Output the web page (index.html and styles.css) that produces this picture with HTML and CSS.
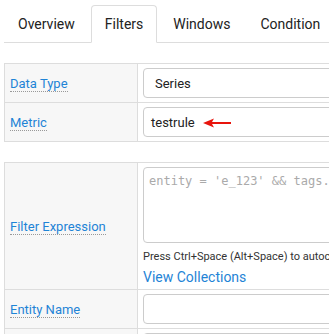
FILE: index.html
```html
<!DOCTYPE html>
<html lang="en">
<head>
  <meta charset="UTF-8" />
  <title>Rule Editor</title>
  <link rel="stylesheet" href="styles.css">
</head>
<body>
  <div class="page">
    <ul class="tabs">
      <li><a href="#">Overview</a></li>
      <li class="active"><a href="#">Filters</a></li>
      <li><a href="#">Windows</a></li>
      <li><a href="#">Condition</a></li>
      <li><a href="#">Actions</a></li>
    </ul>

    <table class="form-table">
      <tr>
        <th><span class="hint">Data Type</span></th>
        <td><div class="field select">Series</div></td>
      </tr>
      <tr>
        <th><span class="hint">Metric</span></th>
        <td>
          <div class="field">testrule
            <svg class="arrow" width="28" height="10" viewBox="0 0 28 10">
              <path d="M0 5 L11 0.5 L9 4 L28 4 L28 6 L9 6 L11 9.5 Z" fill="#e8140c"/>
            </svg>
          </div>
        </td>
      </tr>
    </table>

    <table class="form-table">
      <tr>
        <th><span class="hint">Filter Expression</span></th>
        <td>
          <textarea class="field expr" placeholder="entity = 'e_123' &amp;&amp; tags.severity = 'critical'"></textarea>
          <p class="help">Press Ctrl+Space (Alt+Space) to autocomplete</p>
          <a class="link" href="#">View Collections</a>
        </td>
      </tr>
      <tr>
        <th><span class="hint">Entity Name</span></th>
        <td><div class="field"></div></td>
      </tr>
      <tr>
        <th><span class="hint">Entity Group</span></th>
        <td><div class="field"></div></td>
      </tr>
    </table>
  </div>
</body>
</html>
```

FILE: styles.css
```css
:root {
  --text: #333;
  --link: #1f84d6;
  --border: #dddddd;
  --label-bg: #f7f7f7;
  --font: 'Roboto', 'Liberation Sans', sans-serif;
}

html, body {
  margin: 0;
  padding: 0;
  overflow: hidden;
  background: #fff;
  font-family: var(--font);
  color: var(--text);
}

.page {
  width: 600px;
  padding: 5px 0 0 4px;
}

.tabs {
  display: flex;
  margin: 0;
  padding: 0;
  list-style: none;
  border-bottom: 1px solid var(--border);
}

.tabs li {
  margin-right: 2px;
  margin-bottom: -1px;
}

.tabs a {
  display: block;
  padding: 9px 13px;
  line-height: 18px;
  font-size: 14px;
  color: #222;
  text-decoration: none;
  border: 1px solid transparent;
  border-radius: 4px 4px 0 0;
}

.tabs .active a {
  border-color: var(--border);
  border-bottom-color: #fff;
  background: #fff;
}

.form-table {
  width: 100%;
  margin-top: 20px;
  border-collapse: collapse;
  border: 1px solid var(--border);
  font-size: 13px;
}

.form-table th,
.form-table td {
  padding: 4px 5px;
  border: 1px solid var(--border);
  vertical-align: middle;
}

.form-table th {
  width: 122px;
  text-align: left;
  font-weight: normal;
  background: var(--label-bg);
}

.hint {
  font-size: 13px;
  color: var(--link);
  border-bottom: 1px dotted #999;
}

.field {
  position: relative;
  box-sizing: border-box;
  display: flex;
  align-items: center;
  height: 30px;
  padding: 0 7px;
  font-size: 13px;
  color: #222;
  border: 1px solid #ccc;
  border-radius: 4px;
  background: #fff;
}

.field.select {
  padding-left: 11px;
}

.arrow {
  position: absolute;
  left: 59px;
  top: 10px;
}

.expr {
  display: block;
  width: 100%;
  height: 76px;
  margin: 0;
  padding: 5px;
  resize: none;
  font-family: 'DejaVu Sans Mono', monospace;
  font-size: 12px;
  line-height: 16px;
}

.expr::placeholder {
  color: #aaa;
}

.help {
  margin: 7px 0 0;
  font-size: 11px;
  line-height: 14px;
  white-space: nowrap;
}

.link {
  display: block;
  margin-top: 5px;
  font-size: 14px;
  line-height: 16px;
  color: var(--link);
  text-decoration: none;
}
```
